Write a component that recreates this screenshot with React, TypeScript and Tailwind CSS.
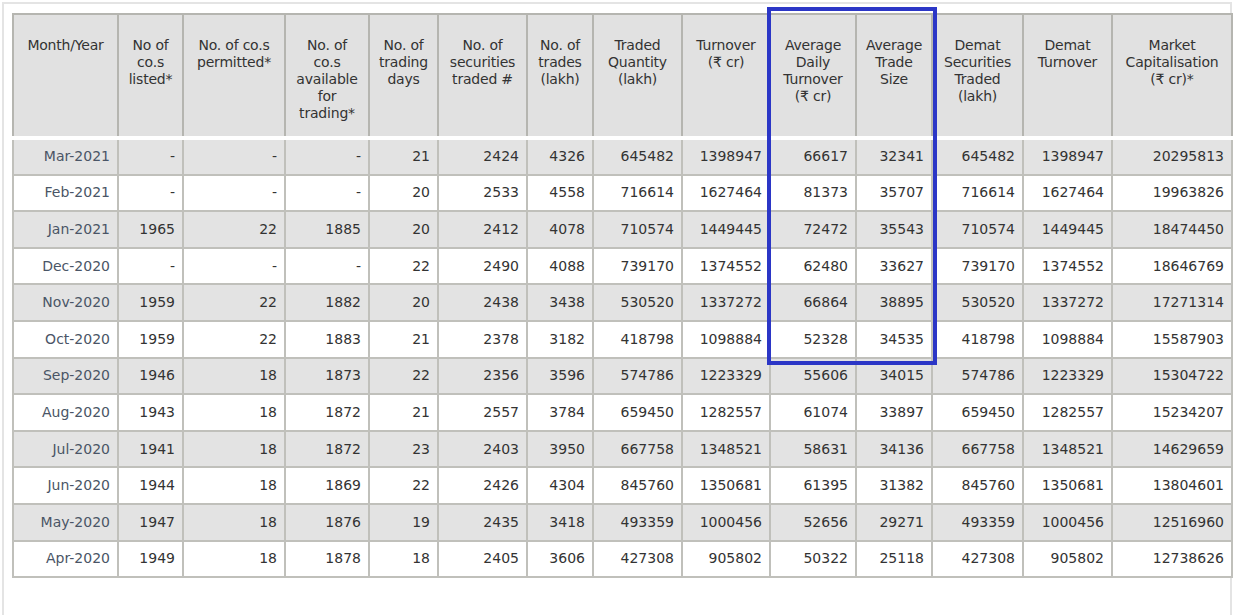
import React from "react";

const widths = [105, 65, 102, 84, 69, 89, 66, 89, 88, 86, 76, 91, 89, 120];
const headers: React.ReactNode[] = [
  "Month/Year",
  <>No of<br />co.s<br />listed*</>,
  <>No. of co.s<br />permitted*</>,
  <>No. of<br />co.s<br />available<br />for<br />trading*</>,
  <>No. of<br />trading<br />days</>,
  <>No. of<br />securities<br />traded #</>,
  <>No. of<br />trades<br />(lakh)</>,
  <>Traded<br />Quantity<br />(lakh)</>,
  <>Turnover<br />(₹ cr)</>,
  <>Average<br />Daily<br />Turnover<br />(₹ cr)</>,
  <>Average<br />Trade<br />Size</>,
  <>Demat<br />Securities<br />Traded<br />(lakh)</>,
  <>Demat<br />Turnover</>,
  <>Market<br />Capitalisation<br />(₹ cr)*</>,
];
const rows = [
  ["Mar-2021","-","-","-","21","2424","4326","645482","1398947","66617","32341","645482","1398947","20295813"],
  ["Feb-2021","-","-","-","20","2533","4558","716614","1627464","81373","35707","716614","1627464","19963826"],
  ["Jan-2021","1965","22","1885","20","2412","4078","710574","1449445","72472","35543","710574","1449445","18474450"],
  ["Dec-2020","-","-","-","22","2490","4088","739170","1374552","62480","33627","739170","1374552","18646769"],
  ["Nov-2020","1959","22","1882","20","2438","3438","530520","1337272","66864","38895","530520","1337272","17271314"],
  ["Oct-2020","1959","22","1883","21","2378","3182","418798","1098884","52328","34535","418798","1098884","15587903"],
  ["Sep-2020","1946","18","1873","22","2356","3596","574786","1223329","55606","34015","574786","1223329","15304722"],
  ["Aug-2020","1943","18","1872","21","2557","3784","659450","1282557","61074","33897","659450","1282557","15234207"],
  ["Jul-2020","1941","18","1872","23","2403","3950","667758","1348521","58631","34136","667758","1348521","14629659"],
  ["Jun-2020","1944","18","1869","22","2426","4304","845760","1350681","61395","31382","845760","1350681","13804601"],
  ["May-2020","1947","18","1876","19","2435","3418","493359","1000456","52656","29271","493359","1000456","12516960"],
  ["Apr-2020","1949","18","1878","18","2405","3606","427308","905802","50322","25118","427308","905802","12738626"],
];

export default function App() {
  return (
    <div className="w-[1240px] h-[615px] bg-white overflow-hidden" style={{ fontFamily: '"DejaVu Sans", Verdana, sans-serif' }}>
      <div className="ml-[2px] mt-[2px] w-[1230px] h-[640px] border-l-2 border-t-2 border-r-2 border-[#e4e4e4] pl-[8px] pt-[9px] relative">
        <table className="border-collapse text-[14px] text-[#333] table-fixed" style={{ width: 1221 }}>
          <colgroup>
            {widths.map((w, i) => <col key={i} style={{ width: w }} />)}
          </colgroup>
          <thead>
            <tr className="h-[124px] bg-[#e1e1e1] border-b-[4px] border-white">
              {headers.map((h, i) => (
                <th key={i} className="align-top font-normal leading-[17px] pt-[22px] px-[2px] border-2 border-[#b5b5b0] text-center tracking-[-0.2px]">{h}</th>
              ))}
            </tr>
          </thead>
          <tbody>
            {rows.map((r, ri) => (
              <tr key={ri} className={`h-[36.6px] ${ri % 2 === 0 ? "bg-[#e3e3e3]" : "bg-white"}`}>
                {r.map((c, ci) => (
                  <td key={ci} className={`border-2 border-[#c0c0bb] text-right pr-[7px] ${ci === 0 ? "text-[#4a5566]" : ""}`}>{c}</td>
                ))}
              </tr>
            ))}
          </tbody>
        </table>
        <div className="absolute left-[763px] top-[3px] w-[170px] h-[358px] border-[4px] border-[#2b36c6] pointer-events-none" />
      </div>
    </div>
  );
}
